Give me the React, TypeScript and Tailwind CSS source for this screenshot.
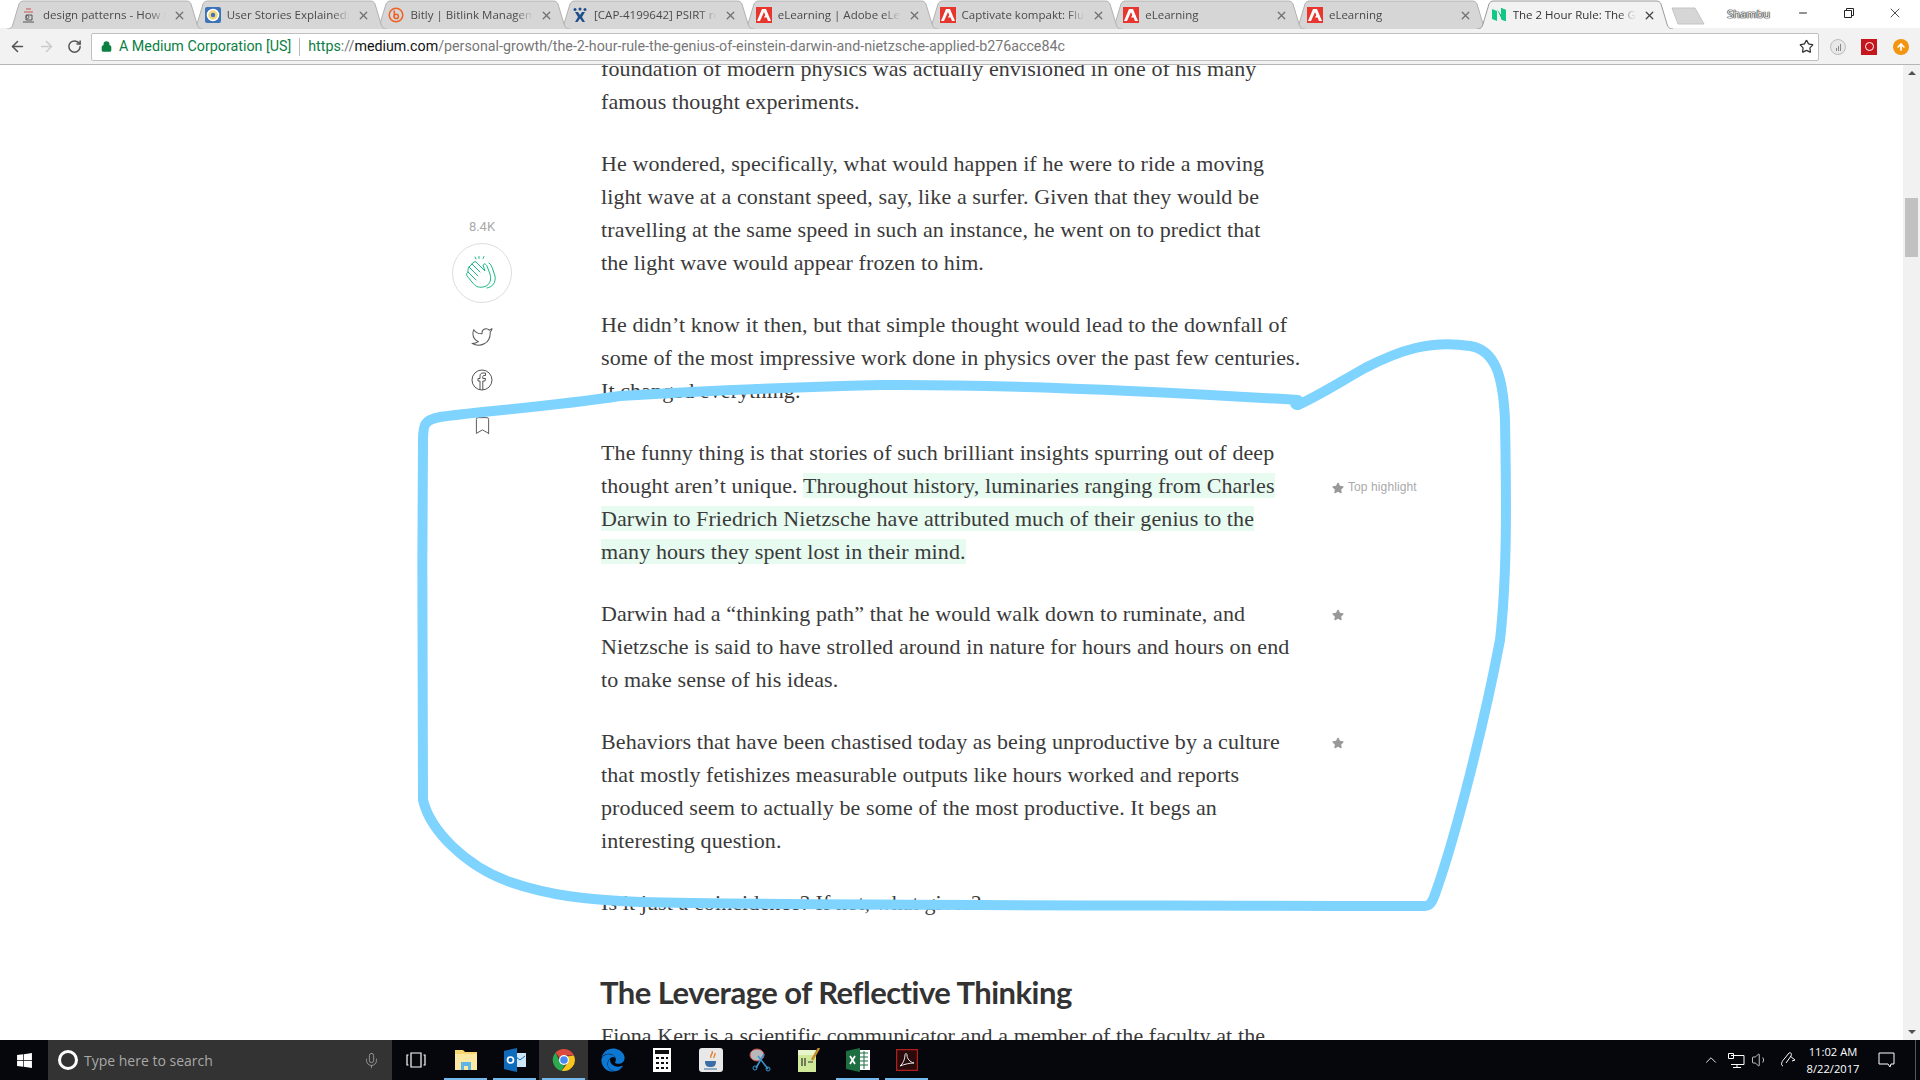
import React from "react";
import { ArrowLeft, ArrowRight, RotateCw, Star, Lock, X, Minus, Bookmark, Mic, ChevronUp, Volume1 } from "lucide-react";
import { FaWindows, FaEdge, FaStar } from "react-icons/fa";
import { FiTwitter } from "react-icons/fi";

const ui = { fontFamily: '"Open Sans", "Liberation Sans", sans-serif' };
const serif = { fontFamily: '"Liberation Serif", serif' };

function AdobeIcon() {
  return (
    <svg width="16" height="16" viewBox="0 0 16 16">
      <rect width="16" height="16" fill="#e8352e" />
      <path d="M6 2 H10 L15 14 H12 L10.6 10.5 H8 L9.3 8 L8 5 L4 14 H1Z" fill="#fff" />
    </svg>
  );
}
function DesignIcon() {
  return (
    <svg width="16" height="16" viewBox="0 0 16 16" fill="none">
      <path d="M5 2h5M3 5h9" stroke="#c9544b" strokeWidth="1.2" />
      <path d="M5 8h6v5H5z M8 10a1.5 1.5 0 1 0 0 .1" stroke="#555" strokeWidth="1" />
      <path d="M2 15h11" stroke="#555" />
    </svg>
  );
}
function UserStoriesIcon() {
  return (
    <svg width="16" height="16" viewBox="0 0 16 16">
      <rect width="16" height="16" rx="2" fill="#3d74b8" />
      <circle cx="8" cy="8" r="5.5" fill="#f3d77a" stroke="#fff" strokeWidth="1.5" />
      <circle cx="8" cy="8" r="2.2" fill="#3d74b8" />
    </svg>
  );
}
function BitlyIcon() {
  return (
    <svg width="16" height="16" viewBox="0 0 16 16" fill="none" stroke="#ee6123" strokeWidth="1.5">
      <circle cx="8" cy="8" r="6.8" />
      <path d="M6.3 3.5v7" />
      <circle cx="8.3" cy="9.4" r="2.1" />
    </svg>
  );
}
function CapIcon() {
  return (
    <svg width="16" height="16" viewBox="0 0 16 16" fill="#1f4e8c">
      <circle cx="3" cy="2.5" r="1.5" />
      <circle cx="8" cy="2" r="1.5" />
      <circle cx="13" cy="2.5" r="1.5" />
      <path d="M3 5 L6 5 L8 8 L10 5 L13 5 L10 10 L13 15 L10.5 15 L8 11.5 L5.5 15 L3 15 L6 10Z" />
    </svg>
  );
}
function MediumIcon() {
  return (
    <svg width="16" height="16" viewBox="0 0 16 16" fill="#10c985">
      <path d="M1 2 L6 4 L6 14 L1 12Z" />
      <path d="M6 2 L11 13 L15 14 L15 3 L10 1 L10 8Z" fill="#0aa86e" />
      <path d="M10 1 L15 3 L15 14 L10 12Z" />
    </svg>
  );
}

const tabs: { title: string; icon: React.ReactNode }[] = [
  { title: "design patterns - How t", icon: <DesignIcon /> },
  { title: "User Stories Explained:", icon: <UserStoriesIcon /> },
  { title: "Bitly | Bitlink Managem", icon: <BitlyIcon /> },
  { title: "[CAP-4199642] PSIRT re", icon: <CapIcon /> },
  { title: "eLearning | Adobe eLea", icon: <AdobeIcon /> },
  { title: "Captivate kompakt: Flui", icon: <AdobeIcon /> },
  { title: "eLearning", icon: <AdobeIcon /> },
  { title: "eLearning", icon: <AdobeIcon /> },
];

function TabShape({ active }: { active?: boolean }) {
  return (
    <svg className="absolute inset-0" width="198" height="29" viewBox="0 0 198 29">
      <path
        d="M1 29 C5 29 6 27 7 24 L13 4 C14 2 15 1 18 1 H180 C183 1 184 2 185 4 L191 24 C192 27 193 29 197 29"
        fill={active ? "#f2f2f2" : "#d6d6d6"}
        stroke={active ? "#9a9a9a" : "#b2b2b2"}
        strokeWidth="1"
      />
    </svg>
  );
}

function Tab({ title, icon, active, z }: { title: string; icon: React.ReactNode; active?: boolean; z: number }) {
  return (
    <div className="relative w-[198px] h-[29px] -mr-[14.3px] shrink-0" style={{ zIndex: z }}>
      <TabShape active={active} />
      <div className="relative flex items-center h-[29px] pl-[15px] pr-[18px] pt-[1px]">
        <span className="w-4 h-4 shrink-0">{icon}</span>
        <span
          className={`ml-[6px] flex-1 overflow-hidden whitespace-nowrap text-[11.5px] [mask-image:linear-gradient(to_right,black_85%,transparent_99%)] ${active ? "text-[#333]" : "text-[#4a4a4a]"}`}
          style={ui}
        >
          {title}
        </span>
        <X size={13} strokeWidth={2.4} className={`ml-[6px] shrink-0 ${active ? "text-[#444]" : "text-[#6f6f6f]"}`} />
      </div>
    </div>
  );
}

function Chrome({ size = 24 }: { size?: number }) {
  return (
    <svg width={size} height={size} viewBox="0 0 24 24">
      <path d="M12 1 A11 11 0 0 1 21.9 7.5 L12 7.5 A4.5 4.5 0 0 0 7.8 10.5 L3.6 4.6 A11 11 0 0 1 12 1Z" fill="#dd4b3e" />
      <path d="M3.6 4.6 L8.2 14.4 A4.5 4.5 0 0 0 13 16.4 L9.8 22.8 A11 11 0 0 1 3.6 4.6Z" fill="#2da94f" />
      <path d="M21.9 7.5 A11 11 0 0 1 9.8 22.8 L15.4 15 A4.5 4.5 0 0 0 15 8.5 Z" fill="#f8c51c" />
      <circle cx="12" cy="12" r="5" fill="#fff" />
      <circle cx="12" cy="12" r="3.8" fill="#4a8af0" />
    </svg>
  );
}

function TaskIcon({ children, under, active }: { children?: React.ReactNode; under?: boolean; active?: boolean }) {
  return (
    <div className={`relative w-[49px] h-10 flex items-center justify-center shrink-0 ${active ? "bg-[#333]" : ""}`}>
      {children}
      {under && <div className="absolute bottom-0 left-[3px] right-[3px] h-[2px] bg-[#76b9ed]" />}
    </div>
  );
}

function TopHighlight() {
  return (
    <div className="absolute left-[731px] top-[35px] flex items-center gap-[4px] text-[#aaa] text-[12px] whitespace-nowrap" style={{ fontFamily: '"Liberation Sans", sans-serif' }}>
      <FaStar size={12} className="text-[#999]" />
      <span>Top highlight</span>
    </div>
  );
}
function SideStar() {
  return <FaStar size={12} className="absolute left-[731px] top-[12px] text-[#999]" />;
}

export default function App() {
  return (
    <div className="relative w-[1920px] h-[1080px] flex flex-col overflow-hidden bg-white">
      {/* tab strip */}
      <div className="h-[28px] flex bg-white relative z-10 shrink-0">
        <div className="flex ml-[6px] h-[29px]">
          {tabs.map((t, i) => (
            <Tab key={i} title={t.title} icon={t.icon} z={20 - i} />
          ))}
          <Tab title="The 2 Hour Rule: The G" icon={<MediumIcon />} active z={30} />
        </div>
        <svg className="ml-[12px] mt-[7px] shrink-0" width="34" height="18" viewBox="0 0 34 18">
          <path d="M1 1 H24 L33 17 H7Z" fill="#d6d6d6" stroke="#c4c4c4" />
        </svg>
        <div className="ml-[22px] mt-[6px] text-[11px] leading-[16px] text-white w-[42px] text-center" style={{ ...ui, textShadow: "0 0 1px #222, 0 0 1px #222, 0 0 1px #222, 0 0 1px #222" }}>
          Shambu
        </div>
        <div className="ml-auto flex items-start text-[#222] mr-[2px]">
          <div className="w-[46px] h-[26px] flex items-center justify-center"><Minus size={12} /></div>
          <div className="w-[46px] h-[26px] flex items-center justify-center">
            <svg width="12" height="12" viewBox="0 0 12 12" fill="none" stroke="#222"><path d="M1.5 3.5h7v7h-7z M3.5 3.5v-2h7v7h-2" /></svg>
          </div>
          <div className="w-[46px] h-[26px] flex items-center justify-center"><X size={16} strokeWidth={1.2} /></div>
        </div>
      </div>

      {/* toolbar */}
      <div className="h-[37px] bg-[#f2f2f2] border-b border-[#b5b5b5] flex items-center shrink-0 pt-px">
        <ArrowLeft size={17} strokeWidth={2.2} className="ml-[9px] text-[#555]" />
        <ArrowRight size={17} strokeWidth={2.2} className="ml-[12px] text-[#ccc]" />
        <RotateCw size={15} strokeWidth={2.4} className="ml-[12px] text-[#555]" />
        <div className="ml-[9px] w-[1728px] h-[28px] bg-white border border-[#c0c0c0] rounded-[2px] flex items-center shrink-0">
          <Lock size={11} strokeWidth={3} fill="#0b8043" className="ml-[9px] text-[#0b8043]" />
          <span className="ml-[7px] text-[14.3px] text-[#0b8043] whitespace-nowrap" style={{ fontFamily: "Roboto, sans-serif" }}>A Medium Corporation [US]</span>
          <span className="ml-[8px] w-px h-[18px] bg-[#bbb]" />
          <span className="ml-[8px] text-[14.25px] text-[#777] whitespace-nowrap" style={{ fontFamily: "Roboto, sans-serif" }}>
            <span className="text-[#0b8043]">https</span>://<span className="text-[#111]">medium.com</span>/personal-growth/the-2-hour-rule-the-genius-of-einstein-darwin-and-nietzsche-applied-b276acce84c
          </span>
          <Star size={15} strokeWidth={2} className="ml-auto mr-[4px] text-[#333]" />
        </div>
        <div className="ml-[11px] w-4 h-4 rounded-full border border-[#bbb] bg-[#e8e8e8] flex items-end justify-center gap-px pb-[3px]">
          <span className="w-px h-[3px] bg-[#888]" /><span className="w-px h-[5px] bg-[#888]" /><span className="w-px h-[7px] bg-[#888]" />
        </div>
        <div className="ml-[15px] w-4 h-4 bg-[#c4161c] flex items-center justify-center">
          <span className="w-[9px] h-[9px] rounded-full border border-white" />
        </div>
        <div className="ml-[16px] w-4 h-4 rounded-full bg-[#f29512] flex items-center justify-center">
          <ArrowRight size={10} strokeWidth={4} className="text-white -rotate-90" />
        </div>
      </div>

      {/* page */}
      <div className="flex-1 flex min-h-0">
        <div className="flex-1 flex overflow-hidden text-[#3a3a3a]">
          <div className="ml-[452px] w-[60px] shrink-0 flex flex-col items-center pt-[152px]">
            <div className="text-[13px] leading-[20px] text-[#aaa]" style={{ fontFamily: "Roboto, sans-serif" }}>8.4K</div>
            <div className="mt-[6px] w-[60px] h-[60px] rounded-full border border-[#ddd] flex items-center justify-center">
              <svg width="34" height="36" viewBox="0 0 34 36" fill="none" stroke="#1cb982" strokeWidth="1" strokeLinejoin="round" strokeLinecap="round">
                <path d="M14 1.5v2M19 1.5l-1 2M10 2l1 2" />
                <path d="M3 17 L11 25 M4 12 L13 21 M7 9 L15 17 M11 7 L20 16 L18 10 C19 8 21 9 22 11 L25 19 C27 26 24 31 18 32 C13 33 10 31 7 27 L2 21 C1 19 2 18 3 17 C3 15 3 13 4 12 C5 11 6 10 7 9 C8 7 10 6 11 7" />
                <path d="M24 8 C26 9 27 12 28 15 L30 21 C31 27 28 32 22 33" />
              </svg>
            </div>
            <FiTwitter size={22} strokeWidth={1.1} className="mt-[23px] text-[#555]" />
            <svg className="mt-[21px]" width="22" height="22" viewBox="0 0 22 22" fill="none" stroke="#555" strokeWidth="1">
              <circle cx="11" cy="11" r="10" />
              <path d="M9 21 V12 H7 V9.5 H9 V7 C9 5 10 4 12 4 H14.500 V6.500 H13 C12 6.500 11.800 7 11.800 7.600 V9.500 H14.500 L14 12 H11.800 V21" />
            </svg>
            <Bookmark size={21} strokeWidth={1.1} className="mt-[24px] text-[#555]" />
          </div>

          <div className="ml-[89px] w-[760px] shrink-0 -mt-[13px] text-[22px] leading-[33px] tracking-[0.1px]" style={serif}>
            <p>foundation of modern physics was actually envisioned in one of his many<br />famous thought experiments.</p>
            <p className="mt-[29px]">He wondered, specifically, what would happen if he were to ride a moving<br />light wave at a constant speed, say, like a surfer. Given that they would be<br />travelling at the same speed in such an instance, he went on to predict that<br />the light wave would appear frozen to him.</p>
            <p className="mt-[29px]">He didn’t know it then, but that simple thought would lead to the downfall of<br />some of the most impressive work done in physics over the past few centuries.<br />It changed everything.</p>
            <div className="relative mt-[29px]">
              <p>The funny thing is that stories of such brilliant insights spurring out of deep<br />thought aren’t unique. <span className="bg-[#e7fbf0]">Throughout history, luminaries ranging from Charles</span><br /><span className="bg-[#e7fbf0]">Darwin to Friedrich Nietzsche have attributed much of their genius to the</span><br /><span className="bg-[#e7fbf0]">many hours they spent lost in their mind.</span></p>
              <TopHighlight />
            </div>
            <div className="relative mt-[29px]">
              <p>Darwin had a “thinking path” that he would walk down to ruminate, and<br />Nietzsche is said to have strolled around in nature for hours and hours on end<br />to make sense of his ideas.</p>
              <SideStar />
            </div>
            <div className="relative mt-[29px]">
              <p>Behaviors that have been chastised today as being unproductive by a culture<br />that mostly fetishizes measurable outputs like hours worked and reports<br />produced seem to actually be some of the most productive. It begs an<br />interesting question.</p>
              <SideStar />
            </div>
            <p className="mt-[29px]">Is it just a coincidence? If not, what gives?</p>
            <h2 className="mt-[55px] -ml-px text-[31px] leading-[36px] font-bold tracking-[-0.52px] text-[#333]" style={{ fontFamily: 'Lato, sans-serif' }}>The Leverage of Reflective Thinking</h2>
            <p className="mt-[9px]">Fiona Kerr is a scientific communicator and a member of the faculty at the</p>
          </div>
        </div>

        {/* scrollbar */}
        <div className="w-[17px] bg-[#f1f1f1] shrink-0 flex flex-col items-center relative">
          <div className="mt-[6px] w-0 h-0 border-l-[4px] border-r-[4px] border-b-[4px] border-l-transparent border-r-transparent border-b-[#505050]" />
          <div className="mt-[123px] w-[13px] h-[59px] bg-[#c1c1c1]" />
          <div className="mt-auto mb-[6px] w-0 h-0 border-l-[4px] border-r-[4px] border-t-[4px] border-l-transparent border-r-transparent border-t-[#505050]" />
        </div>
      </div>

      {/* taskbar */}
      <div className="h-10 bg-[#05070c] flex items-center shrink-0 relative z-10">
        <div className="w-[48px] flex justify-center text-white"><FaWindows size={17} /></div>
        <div className="w-[344px] h-10 bg-[#333] flex items-center shrink-0">
          <span className="ml-[10px] w-5 h-5 rounded-full border-[3px] border-white" />
          <span className="ml-[6px] text-[14px] text-[#a8a8a8]" style={ui}>Type here to search</span>
          <Mic size={17} strokeWidth={1.2} className="ml-auto mr-[12px] text-[#a0a0a0]" />
        </div>
        <div className="w-[49px] flex justify-center shrink-0 -ml-[1px]">
          <svg width="20" height="16" viewBox="0 0 20 16" fill="none" stroke="#fff" strokeWidth="1.2">
            <path d="M5 1h10v14H5z M2.500 3H1v10h1.500 M17.500 3H19v10h-1.500" />
          </svg>
        </div>
        <div className="flex ml-[1px]">
          <TaskIcon under>
            <svg width="22" height="20" viewBox="0 0 22 20">
              <path d="M0 0h8l2 2h12v18H0z" fill="#f5d76e" />
              <path d="M0 4h22v16H0z" fill="#fbe9a3" />
              <path d="M6 12h10v8h-3v-4H9v4H6z" fill="#5db5e8" />
            </svg>
          </TaskIcon>
          <TaskIcon under>
            <svg width="22" height="24" viewBox="0 0 22 24">
              <rect x="10" y="5" width="12" height="14" fill="#cfe6f7" />
              <path d="M11 8l5 4 5-4" stroke="#0f6cbd" fill="none" />
              <path d="M0 3L13 0v24L0 21z" fill="#0f6cbd" />
              <circle cx="6.500" cy="12" r="3" fill="none" stroke="#fff" strokeWidth="1.700" />
            </svg>
          </TaskIcon>
          <TaskIcon under active><Chrome size={24} /></TaskIcon>
          <TaskIcon><FaEdge size={24} className="text-[#0c78d4]" /></TaskIcon>
          <TaskIcon>
            <svg width="18" height="24" viewBox="0 0 18 24">
              <rect width="18" height="24" fill="#fff" />
              <rect x="2" y="2" width="14" height="4" fill="#111" />
              <path d="M3 9h3v2H3zM8 9h3v2H8zM13 9h2v2h-2zM3 14h3v2H3zM8 14h3v2H8zM13 14h2v2h-2zM3 19h3v2H3zM8 19h3v2H8zM13 19h2v2h-2z" fill="#111" />
            </svg>
          </TaskIcon>
          <TaskIcon>
            <svg width="24" height="24" viewBox="0 0 24 24">
              <rect width="24" height="24" rx="3" fill="#e8e8e8" />
              <path d="M13 3c2 3-3 4-1 7M16 5c1 2-2 3-1 5" stroke="#e07a1f" fill="none" strokeWidth="1.300" />
              <path d="M6 13h11c0 5-2 6-5.500 6S6 18 6 13z" fill="#3b6ea5" />
              <path d="M5 21h13" stroke="#3b6ea5" />
            </svg>
          </TaskIcon>
          <TaskIcon>
            <svg width="24" height="24" viewBox="0 0 24 24" fill="none">
              <ellipse cx="9" cy="7" rx="7" ry="6" fill="#b8b8b8" stroke="#c74b4b" />
              <path d="M10 8l10 13M16 6L8 20" stroke="#3a95cf" strokeWidth="1.600" />
              <circle cx="20" cy="21" r="2" stroke="#3a95cf" />
              <circle cx="7" cy="20" r="2" stroke="#3a95cf" />
            </svg>
          </TaskIcon>
          <TaskIcon>
            <svg width="22" height="24" viewBox="0 0 22 24">
              <rect y="2" width="18" height="22" fill="#cfe89a" />
              <rect y="2" width="18" height="5" fill="#e8f5cc" />
              <path d="M4 10v8M7 10v8M10 14h5" stroke="#333" strokeWidth="1.200" />
              <path d="M21 0L14 12" stroke="#c58a2c" strokeWidth="2.500" />
            </svg>
          </TaskIcon>
          <TaskIcon under>
            <svg width="24" height="24" viewBox="0 0 24 24">
              <rect x="9" y="2" width="15" height="20" fill="#fff" />
              <path d="M14 5h8M14 9h8M14 13h8M14 17h8M18 3v18" stroke="#1d6f42" />
              <path d="M0 3L14 0v24L0 21z" fill="#1d6f42" />
              <path d="M4 8l5 8M9 8l-5 8" stroke="#fff" strokeWidth="1.700" />
            </svg>
          </TaskIcon>
          <TaskIcon under>
            <svg width="22" height="22" viewBox="0 0 22 22" fill="none">
              <rect x="0.500" y="0.500" width="21" height="21" fill="#2a0b0b" stroke="#b01e1e" strokeWidth="1.500" />
              <path d="M4 17c3-2 5-7 5-11 0-2 2-2 2 0 0 4 3 7 7 8-4 0-9 1-14 3z" stroke="#e8e8e8" />
            </svg>
          </TaskIcon>
        </div>
        <div className="ml-auto flex items-center text-white h-10">
          <ChevronUp size={18} strokeWidth={1.2} />
          <svg className="ml-[7px]" width="18" height="16" viewBox="0 0 18 16" fill="none" stroke="#fff"><path d="M4 3.500h13v9H4 M1.500 1.500h5v5h-5z M10 13v2M6 15.500h8" /></svg>
          <Volume1 size={18} strokeWidth={1} className="ml-[6px]" />
          <svg className="ml-[11px]" width="18" height="18" viewBox="0 0 18 18" fill="none" stroke="#fff"><path d="M3 15c-3-1-1-5 2-8l4-5c2-1 3 1 2 3l-5 7M10 5l5 4-3 1" /></svg>
          <div className="ml-[8px] w-[54px] text-center text-[11.2px] leading-[17px] whitespace-nowrap" style={ui}>
            <div>11:02 AM</div>
            <div>8/22/2017</div>
          </div>
          <svg className="ml-[18px]" width="17" height="16" viewBox="0 0 17 16" fill="none" stroke="#fff"><path d="M1 1h15v11h-3l-1 3-2-3H1z" /></svg>
          <div className="ml-[20px] w-[1px] h-10 bg-[#555] mr-[4px]" />
        </div>
      </div>

      {/* hand-drawn annotation over the page */}
      <svg className="absolute inset-0 pointer-events-none z-[5]" width="1920" height="1080" viewBox="0 0 1920 1080" fill="none">
        <path
          d="M1298 400 C1150 391 1000 384 880 385 C800 387 700 391 620 396 C540 408 470 412 440 417 C424 420 423 425 423 440 C422 560 422 700 423 800 C430 830 465 866 510 882 C550 896 590 900 640 902 C800 906 1100 905 1425 906 C1430 906 1432 902 1434 897 C1455 840 1485 720 1500 640 C1508 570 1506 480 1505 420 C1503 375 1495 350 1470 346 C1430 340 1400 350 1365 368 C1340 382 1320 395 1298 405"
          stroke="#7fd3ff"
          strokeWidth="10"
          strokeLinecap="round"
          strokeLinejoin="round"
        />
        <circle cx="1297" cy="403" r="7" fill="#7fd3ff" />
      </svg>
    </div>
  );
}
